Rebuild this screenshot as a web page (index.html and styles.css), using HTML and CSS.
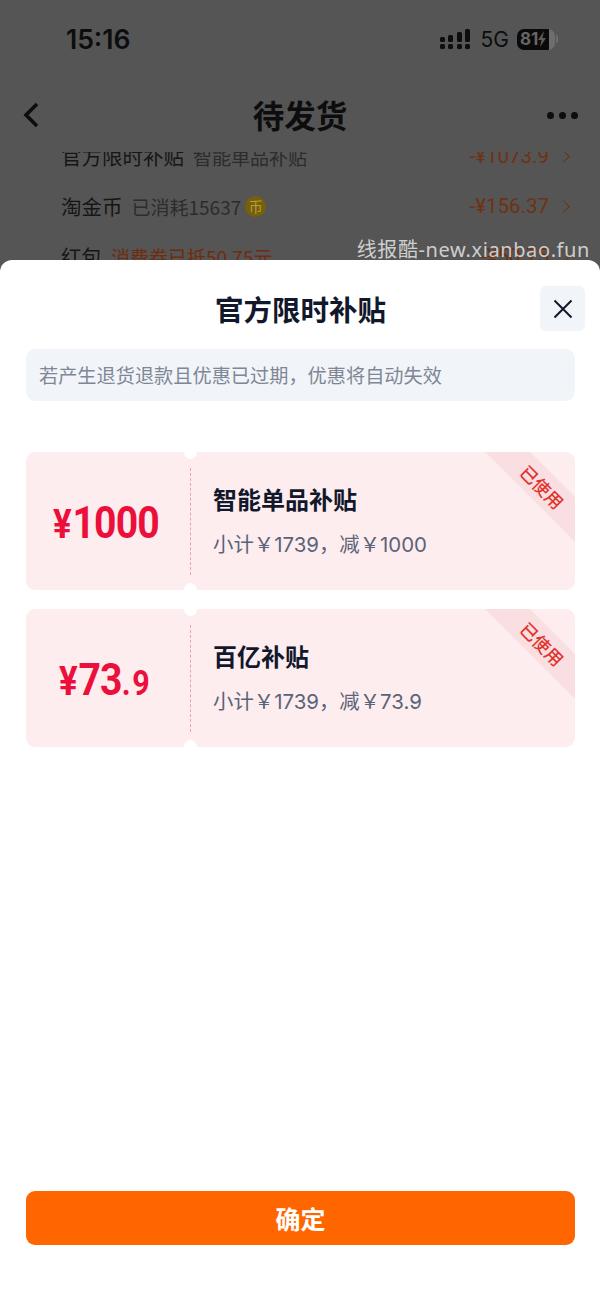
FILE: index.html
```html
<!DOCTYPE html>
<html lang="zh-CN">
<head>
    <meta charset="UTF-8">
    <meta name="viewport" content="width=device-width, initial-scale=1.0">
    <title>官方限时补贴</title>
    <link rel="stylesheet" href="styles.css">
</head>
<body>
    <div class="backdrop">
        <div class="status-bar">
            <span class="time">15:16</span>
            <div class="status-icons">
                <svg class="signal" width="31" height="21" viewBox="0 0 31 21">
                    <g fill="#0d0d0d">
                        <rect x="0" y="8" width="5" height="5" rx="1.5"/>
                        <rect x="0" y="15" width="5" height="5" rx="1.5"/>
                        <rect x="8" y="6" width="5" height="7" rx="1.5"/>
                        <rect x="8" y="15" width="5" height="5" rx="1.5"/>
                        <rect x="17" y="3" width="5" height="10" rx="1.5"/>
                        <rect x="17" y="15" width="5" height="5" rx="1.5"/>
                        <rect x="25" y="0" width="5" height="13" rx="1.5"/>
                        <rect x="25" y="15" width="5" height="5" rx="1.5"/>
                    </g>
                </svg>
                <span class="network">5G</span>
                <div class="battery">
                    <span class="battery-level">81</span>
                    <svg class="bolt" width="10" height="18" viewBox="0 0 10 18"><path d="M7 1 1 10h3.5L3 17l6-9H5.5z" fill="#5a5a5a"/></svg>
                </div>
                <span class="battery-cap"></span>
            </div>
        </div>
        <div class="nav-bar">
            <svg class="back" width="16" height="26" viewBox="0 0 16 26"><path d="M14 2 3 13l11 11" fill="none" stroke="#0d0d0d" stroke-width="3.6"/></svg>
            <h1>待发货</h1>
            <div class="more"><i></i><i></i><i></i></div>
        </div>
        <div class="price-list">
            <div class="price-row first-row">
                <span class="row-name">官方限时补贴</span>
                <span class="row-note">智能单品补贴</span>
                <span class="row-price">-¥1073.9</span>
                <span class="row-arrow"></span>
            </div>
            <div class="price-row">
                <span class="row-name">淘金币</span>
                <span class="row-note">已消耗15637</span>
                <span class="coin">币</span>
                <span class="row-price">-¥156.37</span>
                <span class="row-arrow"></span>
            </div>
            <div class="price-row">
                <span class="row-name">红包</span>
                <span class="row-note orange">消费券已抵50.75元</span>
                <span class="row-price">-¥50.75</span>
                <span class="row-arrow"></span>
            </div>
        </div>
        <div class="watermark">线报酷-new.xianbao.fun</div>
    </div>

    <div class="sheet">
        <div class="sheet-head">
            <h2>官方限时补贴</h2>
            <button class="close">
                <svg width="20" height="20" viewBox="0 0 20 20"><path d="M1.5 1.5l17 17M18.5 1.5l-17 17" fill="none" stroke="#12182b" stroke-width="2"/></svg>
            </button>
        </div>
        <div class="notice">若产生退货退款且优惠已过期，优惠将自动失效</div>

        <div class="tickets">
            <div class="ticket">
                <div class="ticket-amount"><span class="amount"><span class="yen">¥</span>1000</span></div>
                <div class="ticket-info">
                    <div class="ticket-name">智能单品补贴</div>
                    <div class="ticket-desc">小计￥1739，减￥1000</div>
                </div>
                <div class="ribbon"></div>
                <div class="ribbon-text">已使用</div>
            </div>
            <div class="ticket">
                <div class="ticket-amount"><span class="amount"><span class="yen">¥</span>73<small>.9</small></span></div>
                <div class="ticket-info">
                    <div class="ticket-name">百亿补贴</div>
                    <div class="ticket-desc">小计￥1739，减￥73.9</div>
                </div>
                <div class="ribbon"></div>
                <div class="ribbon-text">已使用</div>
            </div>
        </div>

        <button class="confirm">确定</button>
    </div>
</body>
</html>
```

FILE: styles.css
```css
* {
    box-sizing: border-box;
}

body {
    margin: 0;
    width: 600px;
    height: 1298px;
    overflow: hidden;
    background-color: #555;
    font-family: "Noto Sans CJK SC", "Noto Sans", sans-serif;
}

.backdrop {
    position: relative;
    height: 272px;
    margin-bottom: -12px;
    background-color: #555;
    overflow: hidden;
}

.status-bar {
    height: 78px;
    padding: 0 42px 0 66px;
    display: flex;
    justify-content: space-between;
    align-items: center;
}

.time {
    font-family: Inter, sans-serif;
    font-size: 26.5px;
    font-weight: 600;
    color: #0d0d0d;
}

.status-icons {
    display: flex;
    align-items: center;
}

.network {
    margin-left: 10px;
    font-family: Inter, sans-serif;
    font-size: 21px;
    color: #0d0d0d;
}

.battery {
    width: 38px;
    height: 21px;
    margin-left: 8px;
    padding-left: 3px;
    display: flex;
    align-items: center;
    border-radius: 7px;
    background: linear-gradient(90deg, #0a0a0a 84%, #6e6e6e 84%);
    overflow: hidden;
}

.battery-level {
    font-family: Inter, sans-serif;
    font-size: 17px;
    font-weight: 700;
    color: #666;
}

.bolt {
    margin-left: -1px;
}

.battery-cap {
    width: 2px;
    height: 8px;
    margin-left: 1px;
    border-radius: 0 2px 2px 0;
    background-color: #6e6e6e;
}

.nav-bar {
    height: 74px;
    padding: 0 22px 0 23px;
    position: relative;
    display: flex;
    justify-content: space-between;
    align-items: center;
}

.nav-bar h1 {
    position: absolute;
    left: 0;
    right: 0;
    top: 0;
    margin: 0;
    text-align: center;
    font-size: 31.5px;
    line-height: 72px;
    font-weight: 700;
    color: #0d0d0d;
}

.more {
    display: flex;
    gap: 5px;
}

.more i {
    width: 7px;
    height: 7px;
    border-radius: 50%;
    background-color: #0d0d0d;
}

.price-list {
    height: 120px;
    overflow: hidden;
}

.price-row {
    height: 50px;
    padding: 0 32px 0 61px;
    display: flex;
    align-items: center;
    font-size: 20.5px;
}

.first-row {
    margin-top: -21px;
}

.row-name {
    color: #161616;
}

.row-note {
    margin-left: 9px;
    font-size: 19px;
    color: #2c2c2c;
}

.row-note.orange {
    color: #6e2c10;
}

.coin {
    width: 21px;
    height: 21px;
    margin-left: 4px;
    border-radius: 50%;
    background-color: #77600b;
    color: #b89b3b;
    font-size: 14px;
    line-height: 21px;
    text-align: center;
}

.row-price {
    margin-left: auto;
    font-family: Roboto, sans-serif;
    font-size: 20.5px;
    color: #6e3212;
}

.row-arrow {
    width: 9px;
    height: 9px;
    margin-left: 10px;
    border-top: 1.5px solid #6e3212;
    border-right: 1.5px solid #6e3212;
    transform: rotate(45deg);
}

.watermark {
    position: absolute;
    top: 236px;
    right: 10px;
    font-family: "Noto Sans", "Noto Sans CJK SC", sans-serif;
    font-size: 20px;
    line-height: 28px;
    letter-spacing: 0.6px;
    color: rgba(255, 255, 255, 0.72);
}

.sheet {
    position: relative;
    height: 1038px;
    padding: 0 25px 0 26px;
    border-radius: 12px 12px 0 0;
    background-color: #fff;
}

.sheet-head {
    height: 89px;
    padding-top: 23px;
    position: relative;
    text-align: center;
}

.sheet-head h2 {
    margin: 0;
    font-size: 28.5px;
    line-height: 52px;
    font-weight: 700;
    color: #12182b;
}

.close {
    position: absolute;
    top: 26px;
    right: -10px;
    width: 45px;
    height: 45px;
    padding: 0;
    display: flex;
    align-items: center;
    justify-content: center;
    border: none;
    border-radius: 6px;
    background-color: #f1f4f8;
}

.notice {
    height: 52px;
    padding-left: 13px;
    border-radius: 9px;
    background-color: #f1f4f8;
    font-size: 19.2px;
    line-height: 52px;
    color: #7f8796;
}

.tickets {
    margin-top: 51px;
    display: flex;
    flex-direction: column;
    gap: 19px;
}

.ticket {
    position: relative;
    height: 138px;
    display: flex;
    border-radius: 9px;
    background-color: #fdedef;
    overflow: hidden;
}

.ticket-amount {
    position: relative;
    width: 165px;
    padding: 2px 6px 0 0;
    display: flex;
    align-items: center;
    justify-content: center;
}

/* dashed tear line between amount and info */
.ticket-amount::before {
    content: "";
    position: absolute;
    top: 16px;
    bottom: 15px;
    right: 0;
    border-right: 1.5px dashed #eda2ac;
}

/* the two notches */
.ticket::before,
.ticket::after {
    content: "";
    position: absolute;
    left: 158px;
    width: 13px;
    height: 13px;
    border-radius: 50%;
    background-color: #fff;
}

.ticket::before {
    top: -6px;
}

.ticket::after {
    bottom: -6px;
}

.amount {
    font-family: Roboto, sans-serif;
    font-size: 45px;
    font-weight: 700;
    line-height: 1;
    letter-spacing: -1px;
    color: #ec0f3c;
    transform: scaleX(0.87);
}

.yen {
    font-size: 40px;
    margin-right: 2px;
}

.amount small {
    font-size: 35px;
    font-weight: 700;
    letter-spacing: 2px;
}

.ticket-info {
    padding: 29px 0 0 22px;
}

.ticket-name {
    font-size: 24px;
    line-height: 36px;
    font-weight: 600;
    color: #12182b;
}

.ticket-desc {
    margin-top: 13px;
    font-family: Inter, "Noto Sans CJK SC", sans-serif;
    font-size: 20.4px;
    line-height: 30px;
    color: #5a6378;
}

.ribbon {
    position: absolute;
    top: 0;
    right: 0;
    width: 90px;
    height: 90px;
    background-color: #f9dfe1;
    clip-path: polygon(0 0, 45px 0, 90px 45px, 90px 90px);
}

.ribbon-text {
    position: absolute;
    top: 22px;
    right: 4px;
    width: 58px;
    text-align: center;
    font-size: 17.5px;
    font-weight: 500;
    line-height: 26px;
    color: #e0332c;
    transform: rotate(45deg);
}

.confirm {
    position: absolute;
    left: 26px;
    top: 931px;
    width: 549px;
    height: 54px;
    border: none;
    border-radius: 9px;
    background-color: #ff6600;
    font-family: "Noto Sans CJK SC", sans-serif;
    font-size: 25px;
    font-weight: 700;
    color: #fff;
}
```
